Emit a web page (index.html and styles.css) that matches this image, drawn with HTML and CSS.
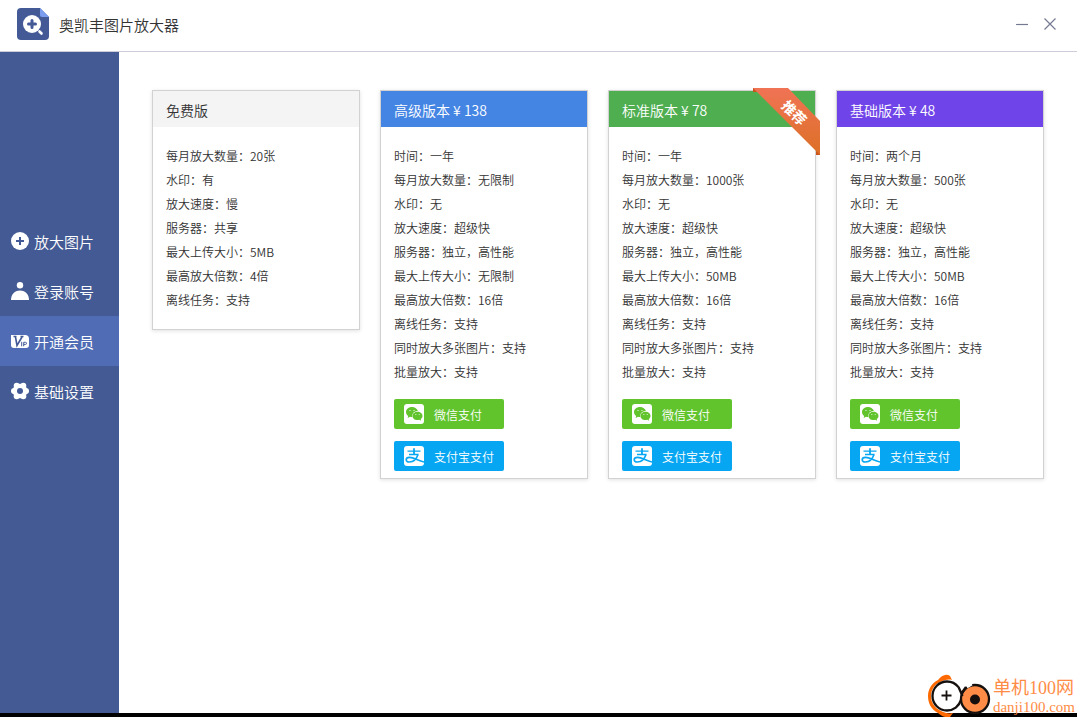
FILE: index.html
```
<!DOCTYPE html>
<html lang="zh-CN">
<head>
<meta charset="utf-8">
<meta name="viewport" content="width=device-width, initial-scale=1">
<title>奥凯丰图片放大器</title>
<link rel="stylesheet" href="styles.css">
</head>
<body>
<svg class="defs" width="0" height="0" aria-hidden="true">
  <symbol id="wechat" viewBox="0 0 20 20">
    <rect width="20" height="20" rx="3" fill="#fff"/>
    <path fill="#62c42d" d="M8 3C4.600 3 2 5.200 2 8c0 1.600.9 3 2.200 3.900L3.600 14l2.500-1.200c.8.200 1.500.3 2.200.2C7.500 9.700 10.200 7 13.900 7 13.300 4.700 10.900 3 8 3z"/>
    <path fill="#62c42d" d="M13.500 7.700c-2.800 0-5 1.900-5 4.200s2.200 4.200 5 4.200c.6 0 1.200-.1 1.700-.3l2 1-.5-1.800c1.100-.8 1.800-1.900 1.800-3.100 0-2.300-2.200-4.200-5-4.200z"/>
    <g fill="#fff"><circle cx="6" cy="6.500" r=".6"/><circle cx="10" cy="6.500" r=".6"/><circle cx="11.900" cy="10.600" r=".5"/><circle cx="15.200" cy="10.600" r=".5"/></g>
  </symbol>
  <symbol id="alipay" viewBox="0 0 20 20">
    <rect width="20" height="20" rx="3" fill="#fff"/>
    <g fill="none" stroke="#06a6f2">
      <path stroke-width="1.300" d="M3.500 5.200h13M5 8.500h9.500"/>
      <path stroke-width="1.800" d="M10 2.300v6"/>
      <path stroke-width="1.600" d="M14 8.500c-1.500 4.500-5 7.500-8.500 7.500-2 0-3.300-1-3.300-2.300 0-1.500 1.500-2.300 3.300-2.300 4.500 0 8 3 14.500 4.600"/>
    </g>
  </symbol>
</svg>
<div class="app">
  <header class="titlebar">
    <svg class="logo" viewBox="0 0 32 32" aria-hidden="true">
      <path fill="#435a97" d="M4 0h19l9 9v19a4 4 0 0 1-4 4H4a4 4 0 0 1-4-4V4a4 4 0 0 1 4-4z"/>
      <path fill="#7b9df0" d="M23 0l9 9h-7a2 2 0 0 1-2-2z"/>
      <circle cx="15" cy="16" r="9" fill="#fff"/>
      <path d="M15 12.500v7M11.500 16h7" stroke="#435a97" stroke-width="3" stroke-linecap="round"/>
      <path d="M22.500 23.500l2 2" stroke="#fff" stroke-width="2.600" stroke-linecap="round"/>
    </svg>
    <h1 class="title">奥凯丰图片放大器</h1>
    <button class="win-btn" type="button" aria-label="最小化"><svg viewBox="0 0 12 12"><path d="M0 6.500h12"/></svg></button>
    <button class="win-btn" type="button" aria-label="关闭"><svg viewBox="0 0 12 12"><path d="M.5.5l11 11M11.500.5l-11 11"/></svg></button>
  </header>
  <div class="body">
    <nav class="sidebar">
      <a class="nav-item" href="#zoom"><svg viewBox="0 0 18 18" aria-hidden="true"><circle cx="9" cy="9" r="9" fill="#fff"/><path d="M9 5v8M5 9h8" stroke="#435a97" stroke-width="2"/></svg>放大图片</a>
      <a class="nav-item" href="#login"><svg viewBox="0 0 18 18" aria-hidden="true" fill="#fff"><circle cx="9" cy="3.200" r="3.200"/><path d="M0 18c0-5 3-9.500 9-9.500s9 4.500 9 9.500z"/></svg>登录账号</a>
      <a class="nav-item active" href="#vip" aria-current="page"><svg viewBox="0 0 18 18" aria-hidden="true"><path fill="#fff" d="M0 3h14a4 4 0 0 1 4 4v6a3 3 0 0 1-3 3H3a3 3 0 0 1-3-3z"/><path d="M2.500 4.500h3M4.400 4.500l1.600 9L11 5M9.500 4.500h3" fill="none" stroke="#435a97" stroke-width="1.600"/><path d="M10.700 9.800v4.500M12.700 14.300v-4h1.800a1 1 0 0 1 0 2.100h-1.800" fill="none" stroke="#435a97" stroke-width="1"/></svg>开通会员</a>
      <a class="nav-item" href="#settings"><svg viewBox="0 0 18 18" aria-hidden="true"><g fill="#fff"><circle cx="9" cy="9" r="7.300"/><circle cx="3" cy="9" r="3"/><circle cx="15" cy="9" r="3"/><circle cx="5.700" cy="3.700" r="3"/><circle cx="12.300" cy="3.700" r="3"/><circle cx="5.700" cy="14.300" r="3"/><circle cx="12.300" cy="14.300" r="3"/></g><circle cx="9" cy="9" r="3" fill="#435a97"/></svg>基础设置</a>
    </nav>
    <main class="plans">
      <section class="card free">
        <h2 class="card-title">免费版</h2>
        <ul class="features">
          <li>每月放大数量：20张</li><li>水印：有</li><li>放大速度：慢</li><li>服务器：共享</li><li>最大上传大小：5MB</li><li>最高放大倍数：4倍</li><li>离线任务：支持</li>
        </ul>
      </section>
      <section class="card premium">
        <h2 class="card-title">高级版本 ¥ 138</h2>
        <ul class="features">
          <li>时间：一年</li><li>每月放大数量：无限制</li><li>水印：无</li><li>放大速度：超级快</li><li>服务器：独立，高性能</li><li>最大上传大小：无限制</li><li>最高放大倍数：16倍</li><li>离线任务：支持</li><li>同时放大多张图片：支持</li><li>批量放大：支持</li>
        </ul>
        <div class="pay">
          <button class="pay-btn wechat" type="button"><svg aria-hidden="true"><use href="#wechat"/></svg>微信支付</button>
          <button class="pay-btn alipay" type="button"><svg aria-hidden="true"><use href="#alipay"/></svg>支付宝支付</button>
        </div>
      </section>
      <section class="card standard">
        <h2 class="card-title">标准版本 ¥ 78</h2>
        <svg class="ribbon" viewBox="0 0 67 67">
          <defs><linearGradient id="rib" x1="0" y1="0" x2="0" y2="1"><stop offset="0" stop-color="#f07355"/><stop offset="1" stop-color="#dc7026"/></linearGradient></defs>
          <path fill="#c9541c" d="M0 0h4v4H0zM63 63h4v4h-4z"/>
          <path fill="url(#rib)" d="M0 0h35l32 33v34z"/>
          <text class="ribbon-text" x="41" y="30" text-anchor="middle" transform="rotate(45 41 25)">推荐</text>
        </svg>
        <ul class="features">
          <li>时间：一年</li><li>每月放大数量：1000张</li><li>水印：无</li><li>放大速度：超级快</li><li>服务器：独立，高性能</li><li>最大上传大小：50MB</li><li>最高放大倍数：16倍</li><li>离线任务：支持</li><li>同时放大多张图片：支持</li><li>批量放大：支持</li>
        </ul>
        <div class="pay">
          <button class="pay-btn wechat" type="button"><svg aria-hidden="true"><use href="#wechat"/></svg>微信支付</button>
          <button class="pay-btn alipay" type="button"><svg aria-hidden="true"><use href="#alipay"/></svg>支付宝支付</button>
        </div>
      </section>
      <section class="card basic">
        <h2 class="card-title">基础版本 ¥ 48</h2>
        <ul class="features">
          <li>时间：两个月</li><li>每月放大数量：500张</li><li>水印：无</li><li>放大速度：超级快</li><li>服务器：独立，高性能</li><li>最大上传大小：50MB</li><li>最高放大倍数：16倍</li><li>离线任务：支持</li><li>同时放大多张图片：支持</li><li>批量放大：支持</li>
        </ul>
        <div class="pay">
          <button class="pay-btn wechat" type="button"><svg aria-hidden="true"><use href="#wechat"/></svg>微信支付</button>
          <button class="pay-btn alipay" type="button"><svg aria-hidden="true"><use href="#alipay"/></svg>支付宝支付</button>
        </div>
      </section>
    </main>
  </div>
  <div class="watermark">
    <svg class="mark" viewBox="0 0 66 44" aria-hidden="true">
      <path fill="#ff6a00" d="M11 6c3-4 8-7 12-4l2 4c-4-1-8 0-12 2C7 11 4 16 4 22c0 7 4 12 10 15 4 2 8 3 12 2l-3 4c-4 1-9-1-12-4C4 35 1 29 1 22 1 15 5 9 11 6z"/>
      <circle cx="20" cy="22" r="14.500" fill="#fff" stroke="#15100e" stroke-width="2.300" stroke-dasharray="77 14.100" stroke-dashoffset="-4"/>
      <path d="M14.500 21.500h10M19.500 16.500v10" stroke="#15100e" stroke-width="1.800"/>
      <circle cx="48" cy="25" r="14" fill="#ff8c46" stroke="#15100e" stroke-width="2.300"/>
      <path d="M39.500 12.500l5-3" stroke="#fff" stroke-width="4"/>
      <path d="M31.500 13l4 9M39 13l-5 7" stroke="#15100e" stroke-width="2.300"/>
      <circle cx="48" cy="25.500" r="5" fill="#15100e"/>
    </svg>
    <div class="mark-text"><span class="mark-name">单机100网</span><span class="mark-url">danji100.com</span></div>
  </div>
</div>
</body>
</html>
```
FILE: styles.css
```
* { box-sizing: border-box; }
body {
  margin: 0;
  font-family: "Noto Sans CJK SC", sans-serif;
  font-size: 12px;
  font-weight: 350;
  color: #333;
  background: #fff;
}
.defs { position: absolute; }
.app {
  position: relative;
  display: flex;
  flex-direction: column;
  min-height: 100vh;
  border-bottom: 4px solid #000;
}
.titlebar {
  display: flex;
  align-items: center;
  height: 52px;
  padding: 0 13px 4px 17px;
  border-bottom: 1px solid #cdcdda;
}
.logo { width: 32px; height: 32px; }
.title {
  flex: 1;
  margin: 2px 0 0 10px;
  font-size: 15px;
  line-height: 24px;
  font-weight: 350;
}
.win-btn {
  display: grid;
  place-items: center;
  width: 28px;
  height: 28px;
  padding: 0;
  border: 0;
  background: none;
}
.win-btn svg {
  width: 12px;
  height: 12px;
  fill: none;
  stroke: #757a92;
  stroke-width: 1.2;
}
.body { display: flex; flex: 1; }
.sidebar {
  flex: none;
  width: 119px;
  padding-top: 164px;
  background: #435a94;
}
.nav-item {
  display: flex;
  align-items: center;
  gap: 5px;
  height: 50px;
  padding-left: 11px;
  font-size: 15px;
  color: #fff;
  text-decoration: none;
}
.nav-item svg { width: 18px; height: 18px; }
.nav-item.active { background: #4f6cb4; }
.plans {
  flex: 1;
  display: grid;
  grid-template-columns: repeat(4, 1fr);
  gap: 20px;
  align-items: start;
  padding: 38px 33px;
}
.card {
  position: relative;
  border: 1px solid #d2d2d2;
  box-shadow: 0 1px 4px rgba(0, 0, 0, 0.12);
}
.card-title {
  margin: 0;
  padding: 2px 13px 0;
  font-size: 14px;
  line-height: 34px;
  font-weight: 350;
  color: #fff;
}
.free .card-title { background: #f4f4f4; color: #333; }
.premium .card-title { background: #4485e4; }
.standard .card-title { background: #4eae50; }
.basic .card-title { background: #6f44e8; }
.features {
  margin: 0;
  padding: 17px 13px;
  list-style: none;
  line-height: 24px;
}
.pay {
  display: flex;
  flex-direction: column;
  align-items: flex-start;
  gap: 12px;
  margin-top: -2px;
  padding: 0 13px 7px;
}
.pay-btn {
  display: flex;
  align-items: center;
  gap: 10px;
  width: 110px;
  height: 30px;
  padding: 0 10px;
  border: 0;
  border-radius: 2px;
  font: inherit;
  color: #fff;
  white-space: nowrap;
}
.pay-btn svg { flex: none; width: 20px; height: 20px; }
.pay-btn.wechat { background: #62c42d; }
.pay-btn.alipay { background: #06a6f2; }
.ribbon {
  position: absolute;
  top: -3px;
  right: -5px;
  width: 67px;
  height: 67px;
}
.ribbon-text { font-size: 14px; font-weight: 700; fill: #fff; }
.watermark {
  position: absolute;
  right: 2px;
  bottom: -5px;
  display: flex;
  align-items: center;
  font-weight: 400;
  color: #ff8c46;
}
.mark { width: 66px; height: 44px; }
.mark-text {
  display: flex;
  flex-direction: column;
  font-family: "Liberation Serif", "Noto Sans CJK SC", serif;
}
.mark-name { font-size: 18px; line-height: 22px; }
.mark-url { font-size: 15px; line-height: 16px; }
```
